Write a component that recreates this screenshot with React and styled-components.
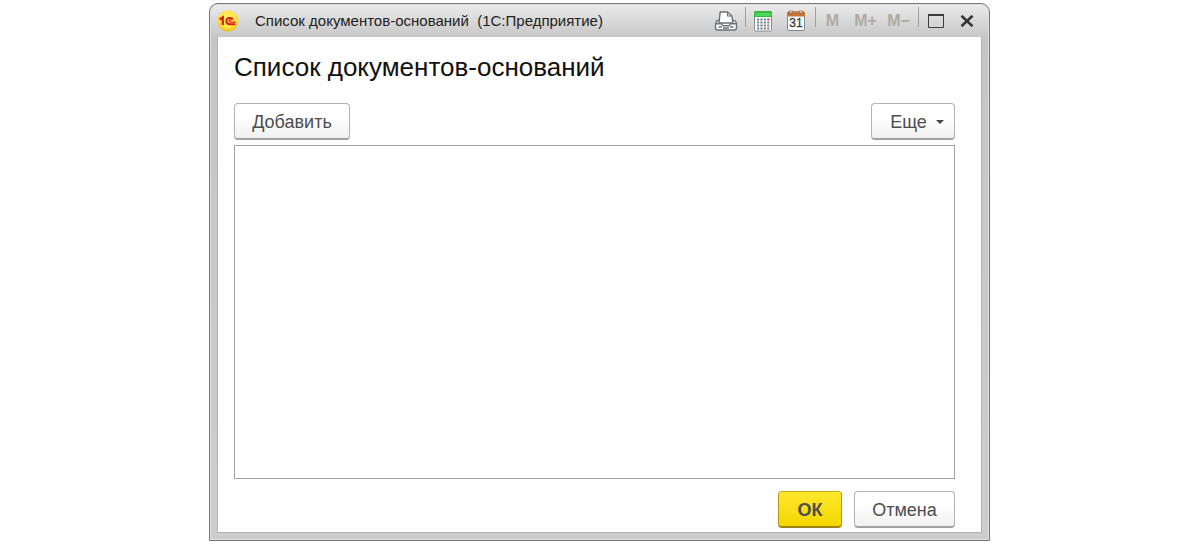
import React from 'react'
import styled, { createGlobalStyle } from 'styled-components'


const App = () => {
  return (
    <>
      <GlobalStyle/>
      <Screen>
        <Window>
          <TitleBar>
            <Logo/>
            <Caption>Список документов-оснований&nbsp; (1С:Предприятие)</Caption>
            <ToolGroup>
              <Tool aria-label="Печать"><PrinterIcon/></Tool>
            </ToolGroup>
            <ToolGroup>
              <Tool aria-label="Калькулятор"><CalculatorIcon/></Tool>
              <Tool aria-label="Календарь"><CalendarIcon/></Tool>
            </ToolGroup>
            <ToolGroup>
              <MemoryTool>M</MemoryTool>
              <MemoryTool>M+</MemoryTool>
              <MemoryTool>M−</MemoryTool>
            </ToolGroup>
            <Tool aria-label="Развернуть"><MaximizeIcon/></Tool>
            <Tool aria-label="Закрыть"><CloseIcon/></Tool>
          </TitleBar>
          <Content>
            <Heading>Список документов-оснований</Heading>
            <CommandBar>
              <Button $width={116}>Добавить</Button>
              <MenuButton $width={84}>Еще <Caret/></MenuButton>
            </CommandBar>
            <DocumentList role="listbox" aria-label="Список документов-оснований"/>
            <Footer>
              <PrimaryButton $width={64}>ОК</PrimaryButton>
              <Button $width={101}>Отмена</Button>
            </Footer>
          </Content>
        </Window>
      </Screen>
    </>
  )
}

export default App

const Logo = () => (
  <svg width="22" height="22" viewBox="0 0 22 22" aria-hidden="true">
    <defs>
      <radialGradient id="logoFill" cx="50%" cy="42%" r="60%">
        <stop offset="0" stopColor="#fff27a"/>
        <stop offset="0.65" stopColor="#ffe640"/>
        <stop offset="1" stopColor="#eeb71a"/>
      </radialGradient>
    </defs>
    <circle cx="11" cy="11" r="10.5" fill="url(#logoFill)"/>
    <path d="M2.6 9.4 L5.8 7.4 V15" fill="none" stroke="#dc1f16" strokeWidth="2.3"/>
    <path d="M15.8 9.6 C15 7.4 9.4 7 9.4 11 C9.4 13.4 11 14.3 12.8 14.3 H18.5" fill="none" stroke="#dc1f16" strokeWidth="1.9"/>
    <path d="M14.6 10.4 C13.8 9.4 12 9.8 12 11 C12 11.8 12.6 12.1 13.4 12.1 H18.5" fill="none" stroke="#dc1f16" strokeWidth="1.1"/>
  </svg>
)

const PrinterIcon = () => (
  <svg width="24" height="22" viewBox="0 0 24 22" fill="#fff" stroke="#68737b" strokeWidth="1.4" strokeLinejoin="round">
    <path d="M5.5 10.5 H4 C2.6 10.5 1.5 12.5 1.5 15 V17.5 C1.5 19.2 2.3 20 3.5 20 H20.5 C21.7 20 22.5 19.2 22.5 17.5 V15 C22.5 12.5 21.4 10.5 20 10.5 H18.5"/>
    <path d="M5 13 L6.2 2 H13.5 L17.8 6 L19 13 Z"/>
    <path d="M13.5 2 V6 H17.8" fill="none" strokeWidth="1.1"/>
    <path d="M2 13.8 H7.5 L9 15.8 H15 L16.5 13.8 H22 M4.5 17 H8 M16 17 H19.5 M9 18 H15" fill="none"/>
  </svg>
)

const CalculatorIcon = () => (
  <svg width="20" height="22" viewBox="0 0 20 22">
    <rect x="1.5" y="1.5" width="17" height="19.5" rx="1.5" fill="#fff" stroke="#7f8d93"/>
    <path d="M1 7 V2.5 Q1 1 2.5 1 H17.5 Q19 1 19 2.5 V7 Z" fill="#35b842"/>
    <path d="M2.5 4.5 H17.5" stroke="#4cdb58" strokeWidth="3"/>
    <path d="M4 9.5 H13 M4 12.5 H16.5 M4 15.5 H16.5 M4 18.5 H16.5" stroke="#70848d" strokeWidth="2" strokeDasharray="2.2 1.2"/>
    <path d="M14.2 9.5 H16.4" stroke="#e5382e" strokeWidth="2"/>
  </svg>
)

const CalendarIcon = () => (
  <svg width="20" height="23" viewBox="0 0 20 23">
    <rect x="1.5" y="3" width="17" height="18.5" rx="1.5" fill="#fff" stroke="#7f898e"/>
    <path d="M1 7.5 V4 Q1 2.5 2.5 2.5 H17.5 Q19 2.5 19 4 V7.5 Z" fill="#c4713a"/>
    <path d="M5 1 V5 M15 1 V5" stroke="#9b6a4b" strokeWidth="2.6"/>
    <path d="M5 1 V4 M15 1 V4" stroke="#fff" strokeWidth="1"/>
    <text x="10" y="18" textAnchor="middle" fontFamily="Liberation Sans, sans-serif" fontSize="12" fill="#333c44" stroke="#333c44" strokeWidth="0.3">31</text>
  </svg>
)

const MaximizeIcon = () => (
  <svg width="16" height="14" viewBox="0 0 16 14" fill="none" stroke="#3b3b3b">
    <path d="M0.5 1 V13.5 H15.5 V1"/>
    <path d="M0 1 H16" strokeWidth="2"/>
  </svg>
)

const CloseIcon = () => (
  <svg width="14" height="12" viewBox="0 0 14 12" fill="none" stroke="#353535" strokeWidth="2.6">
    <path d="M1.5 0.8 L12.5 11.2 M12.5 0.8 L1.5 11.2"/>
  </svg>
)

const GlobalStyle = createGlobalStyle`
  * {
    box-sizing: border-box;
  }

  body {
    margin: 0;
    background: #fefefe;
    font-family: "Liberation Sans", Arial, sans-serif;
  }
`

const Screen = styled.div`
  display: flex;
  min-height: 100vh;
  padding: 3px 210px 3px 209px;
`

const Window = styled.section`
  flex: 1;
  display: flex;
  flex-direction: column;
  padding: 0 7px 7px;
  border: 1px solid #777;
  border-radius: 9px 9px 0 0;
  background: linear-gradient(#ebebeb, #c6c6c6 34px, #cdcdcd);
  box-shadow: inset 0 0 0 1px #dedede;
`

const TitleBar = styled.header`
  display: flex;
  align-items: center;
  height: 33px;
`

const Caption = styled.span`
  flex: 1;
  margin-left: 16px;
  color: #222;
  font-size: 15px;
  line-height: 20px;
  white-space: nowrap;
`

const ToolGroup = styled.div`
  display: flex;
  padding-right: 3px;
  border-right: 1px solid;
  border-image: linear-gradient(#a0a0a0 70%, transparent 70%) 1;
`

const Tool = styled.button`
  display: flex;
  align-items: center;
  justify-content: center;
  width: 33px;
  height: 28px;
  padding: 0;
  border: 0;
  background: none;

  &:last-child {
    width: 30px;
  }

  ${ToolGroup} > & {
    width: 33px;
  }
`

const MemoryTool = styled(Tool)`
  color: #b0aaa4;
  font-family: inherit;
  font-size: 16px;
  font-weight: bold;
`

const Content = styled.main`
  flex: 1;
  display: flex;
  flex-direction: column;
  padding: 14px 26px 4px 16px;
  border: 1px solid #b2b2b2;
  border-top: 0;
  background: #fefefe;
`

const Heading = styled.h1`
  margin: 0;
  color: #111;
  font-size: 26px;
  font-weight: normal;
  line-height: 32px;
`

const CommandBar = styled.div`
  display: flex;
  justify-content: space-between;
  margin-top: 20px;
`

const Button = styled.button`
  display: flex;
  align-items: center;
  justify-content: center;
  gap: 9px;
  width: ${props => props.$width}px;
  height: 37px;
  padding: 2px 0 0;
  border: 1px solid #b3b3b3;
  border-bottom: 2px solid #a0a0a0;
  border-radius: 4px;
  background: linear-gradient(#fff 40%, #f0f0f0);
  color: #4d4d4d;
  font-family: inherit;
  font-size: 18px;
`

const MenuButton = styled(Button)`
  padding-left: 8px;
`

const PrimaryButton = styled(Button)`
  border-color: #c5ab16 #b39b16 #998413;
  background: linear-gradient(#ffe82e, #f3d600);
  font-weight: bold;
`

const Caret = styled.span`
  border: 4px solid transparent;
  border-top-color: #444;
  border-bottom: 0;
`

const DocumentList = styled.div`
  flex: 1;
  margin-top: 5px;
  border: 1px solid #a3a3a3;
`

const Footer = styled.footer`
  display: flex;
  justify-content: flex-end;
  gap: 12px;
  margin-top: 12px;
`
